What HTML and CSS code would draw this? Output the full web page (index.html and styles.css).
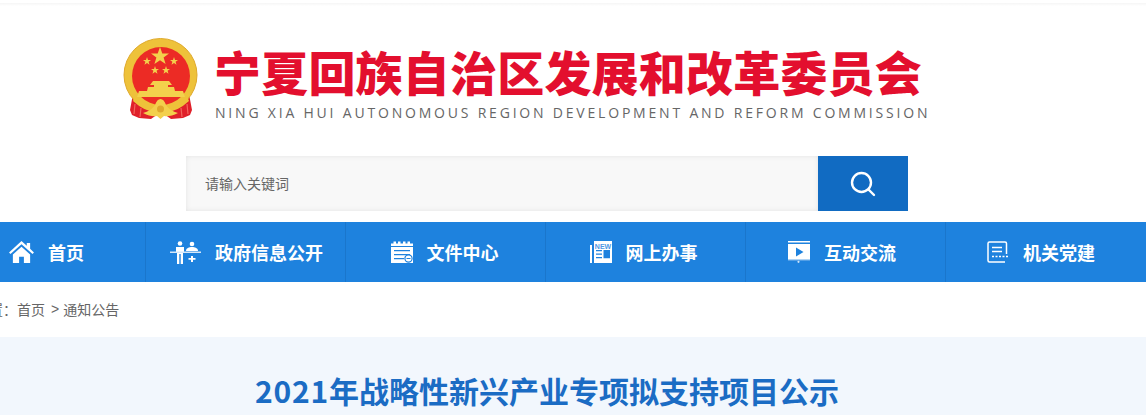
FILE: index.html
```html
<!DOCTYPE html>
<html lang="zh-CN">
<head>
  <meta charset="UTF-8" />
  <meta name="viewport" content="width=device-width, initial-scale=1" />
  <title>2021年战略性新兴产业专项拟支持项目公示</title>
  <link rel="stylesheet" href="styles.css">
</head>
<body>
  <div class="top-line"></div>

  <div class="wrap">
    <header class="logo">
      <svg class="emblem" viewBox="0 0 76 82" aria-hidden="true">
        <path d="M10 56 L7 72 L9 77 L16 80 L28 81 L35 76 L35 60 Z" fill="#e0202a"/>
        <path d="M66 56 L69 72 L67 77 L60 80 L48 81 L41 76 L41 60 Z" fill="#e0202a"/>
        <path d="M12 66 L11 76 M18 70 L17 79 M58 70 L59 79 M64 66 L65 76" stroke="#f2665c" stroke-width="1.2" fill="none"/>
        <circle cx="37.500" cy="37" r="36.500" fill="#eec23a" stroke="#dfa92c" stroke-width="1"/>
        <circle cx="38" cy="38" r="29" fill="#ec2b25"/>
        <polygon points="37,9 39.300,15.500 46,15.500 40.600,19.600 42.600,26 37,22.200 31.400,26 33.400,19.600 28,15.500 34.700,15.500" fill="#f3d04c"/>
        <polygon points="24,19 25,22 28,22 25.600,23.800 26.500,26.800 24,25 21.500,26.800 22.400,23.800 20,22 23,22" fill="#f3d04c"/>
        <polygon points="51,19 52,22 55,22 52.600,23.800 53.500,26.800 51,25 48.500,26.800 49.400,23.800 47,22 50,22" fill="#f3d04c"/>
        <polygon points="32,28 33,31 36,31 33.600,32.800 34.500,35.800 32,34 29.500,35.800 30.400,32.800 28,31 31,31" fill="#f3d04c"/>
        <polygon points="43,28 44,31 47,31 44.600,32.800 45.500,35.800 43,34 40.500,35.800 41.400,32.800 39,31 42,31" fill="#f3d04c"/>
        <path d="M30 43 H46 L49 47 H45 V49 H51 L52 53 H60 L62 59 H14 L16 53 H24 L25 49 H31 V47 H27 Z" fill="#f3d04c"/>
        <path d="M12 58 Q24 70 38 69 Q52 70 64 58 L66 63 Q52 76 38 74 Q24 76 10 63 Z" fill="#eec23a"/>
        <path d="M20 75 Q28 73 32 67 Q34 61 37.500 61 Q41 61 43 67 Q47 73 55 75 Q47 79 41 78 L37.500 81 L34 78 Q28 79 20 75 Z" fill="#f3d04c"/>
        <circle cx="37.500" cy="71" r="3.500" fill="#dfa92c"/>
      </svg>
      <div class="logo-text">
        <h1>宁夏回族自治区发展和改革委员会</h1>
        <p>NING XIA HUI AUTONOMOUS REGION DEVELOPMENT AND REFORM COMMISSION</p>
      </div>
    </header>

    <form class="search">
      <input type="text" placeholder="请输入关键词" />
      <button type="button" aria-label="搜索">
        <svg viewBox="0 0 26 26" width="26" height="26" fill="none" stroke="#fff" stroke-width="2.4" aria-hidden="true">
          <circle cx="11.500" cy="11.500" r="9.500"/>
          <path d="M18.500 18.500 L24 24" stroke-linecap="round"/>
        </svg>
      </button>
    </form>
  </div>

  <nav class="nav">
    <a href="#" class="nav-item">
      <svg class="nav-icon home" viewBox="0 0 26 24" aria-hidden="true">
        <path d="M13 0 L18.500 5 V2 H22 V8.200 L26 12 L24.500 13.500 L13 3.500 L1.500 13.500 L0 12 Z" fill="#fff"/>
        <path d="M4 14 L13 6 L22 14 V23 H15.500 V16.500 H10.500 V23 H4 Z" fill="#fff"/>
      </svg>
      <span>首页</span>
    </a>
    <a href="#" class="nav-item">
      <svg class="nav-icon wide" viewBox="0 0 31 23" aria-hidden="true">
        <circle cx="10" cy="2.500" r="2.300" fill="#fff"/>
        <path d="M6 6 H14 V11 H13 V23 H10.700 V13 H9.300 V23 H7 V11 H6 Z" fill="#fff"/>
        <circle cx="22" cy="3" r="2.300" fill="#fff"/>
        <path d="M16 10 C16 7 19 6 22 6 C25 6 28 7 28 10 Z" fill="#fff"/>
        <path d="M0 10.500 H31 V12 H0 Z" fill="#d6e8f9"/>
        <path d="M21 15 H23 V17 H25.500 V18.700 H23 V21 H21 V18.700 H18.500 V17 H21 Z" fill="#fff"/>
      </svg>
      <span>政府信息公开</span>
    </a>
    <a href="#" class="nav-item">
      <svg class="nav-icon" viewBox="0 0 22 22" aria-hidden="true">
        <path d="M0 2.500 H2.500 V0.500 H5 V2.500 H7 V0.500 H9.500 V2.500 H12 V0.500 H14.500 V2.500 H16.500 V0.500 H19 V2.500 H22 V5 H0 Z" fill="#fff"/>
        <path d="M0 6 H22 V22 H0 Z M3 9 V10.200 H19 V9 Z M3 13 V14.200 H19 V13 Z M3 17 V18.200 H13 V17 Z" fill="#fff" fill-rule="evenodd"/>
        <circle cx="17.500" cy="17.500" r="3.600" fill="#fff" stroke="#1e82de" stroke-width="1.200"/>
        <path d="M15.500 17 H19.500 V18 H15.500 Z" fill="#1e82de"/>
      </svg>
      <span>文件中心</span>
    </a>
    <a href="#" class="nav-item">
      <svg class="nav-icon" viewBox="0 0 22 22" aria-hidden="true">
        <path d="M0 4 H2 V22 H0 Z" fill="#fff"/>
        <path d="M4 0 H22 V22 H4 Z M6 9 V10.300 H12 V9 Z M6 12.500 V13.800 H12 V12.500 Z M6 16 V17.300 H12 V16 Z M13.500 9 V17.300 H20 V9 Z" fill="#fff" fill-rule="evenodd"/>
        <text class="new-tag" x="13" y="7.500" text-anchor="middle">NEW</text>
      </svg>
      <span>网上办事</span>
    </a>
    <a href="#" class="nav-item">
      <svg class="nav-icon" viewBox="0 0 22 22" aria-hidden="true">
        <path d="M0 0 H22 V1.500 H0 Z" fill="#fff"/>
        <path d="M0 3 H22 V18.500 H0 Z M8 6.500 V15.500 L15.500 11 Z" fill="#fff" fill-rule="evenodd"/>
        <path d="M0 18.500 H22 V19.300 H0 Z" fill="#cfe4f8"/>
        <circle cx="10.500" cy="20.800" r="1.100" fill="#cfe4f8"/>
      </svg>
      <span>互动交流</span>
    </a>
    <a href="#" class="nav-item">
      <svg class="nav-icon" viewBox="0 0 22 22" fill="none" stroke="#fff" stroke-width="1.500" aria-hidden="true">
        <path d="M19.500 13 V2.500 Q19.500 1 18 1 H2.500 Q1 1 1 2.500 V19.500 Q1 21 2.500 21 H18"/>
        <path d="M5 6.500 H15 M5 10.500 H15"/>
        <path d="M5 15.500 H21" stroke-dasharray="2 1.500"/>
      </svg>
      <span>机关党建</span>
    </a>
  </nav>

  <div class="crumb">
    <span>当前位置：</span><a href="#">首页</a><em>&gt;</em><a href="#">通知公告</a>
  </div>

  <main class="article">
    <h2><span class="num">2021</span>年战略性新兴产业专项拟支持项目公示</h2>
  </main>
</body>
</html>
```

FILE: styles.css
```css
html, body {
  overflow: hidden;
}
body {
  margin: 0;
  padding: 0;
  background: white;
  font-family: "Liberation Sans", "Noto Sans CJK SC", sans-serif;
  color: #555;
}
a {
  text-decoration: none;
  color: inherit;
}
.top-line {
  height: 6px;
  background: linear-gradient(#fff 50%, #f5f5f5 50%, #fff);
}
/* the page is 1200 wide and sits 54px off the left edge */
.wrap, .nav, .crumb, .article h2 {
  width: 1200px;
  margin-left: -54px;
}
.logo {
  display: flex;
  align-items: flex-start;
  gap: 15px;
  padding: 32px 0 0 177px;
  height: 118px;
}
.emblem {
  width: 76px;
  height: 82px;
  flex: none;
}
.logo-text h1 {
  margin: 3px 0 0 0;
  font-family: "Noto Sans CJK SC", sans-serif;
  font-size: 47px;
  line-height: 60px;
  font-weight: 900;
  letter-spacing: 0.2px;
  color: #e30f2e;
  white-space: nowrap;
}
.logo-text p {
  margin: 2px 0 0 1px;
  font-family: "Open Sans", sans-serif;
  font-size: 14px;
  line-height: 20px;
  letter-spacing: 2.8px;
  color: #666;
  white-space: nowrap;
}
.search {
  display: flex;
  justify-content: center;
  height: 55px;
  margin-bottom: 11px;
  padding-left: 2px;
}
.search input {
  width: 632px;
  box-sizing: border-box;
  padding: 0 19px;
  border: none;
  background: #f8f8f8;
  box-shadow: inset 0 0 5px #e2e2e2;
  font-family: "Liberation Sans", "Noto Sans CJK SC", sans-serif;
  font-size: 14px;
  outline: none;
}
.search input::placeholder {
  color: #666;
}
.search button {
  width: 90px;
  border: none;
  background: #116bc2;
  display: flex;
  align-items: center;
  justify-content: center;
  cursor: pointer;
}
.nav {
  display: flex;
  height: 60px;
  background: #1e82de;
}
.nav-item {
  width: 200px;
  box-sizing: border-box;
  display: flex;
  align-items: center;
  justify-content: center;
  gap: 14px;
  border-right: 1px solid #1a76cc;
  color: white;
  font-family: "Noto Sans CJK SC", sans-serif;
  font-size: 18px;
  font-weight: 700;
}
.nav-item:nth-child(1), .nav-item:nth-child(2) {
  padding-left: 2px;
}
.nav-item:nth-child(3) {
  padding-right: 2px;
}
.nav-item:nth-child(4) {
  padding-right: 4px;
}
.nav-item:nth-child(5) {
  padding-right: 7px;
}
.nav-item:last-child {
  padding-right: 10px;
  border-right: none;
}
.nav-icon {
  width: 22px;
  height: 22px;
  flex: none;
}
.nav-icon.home {
  width: 25px;
  height: 23px;
}
.nav-icon.wide {
  width: 31px;
  height: 23px;
}
.new-tag {
  font-family: "Liberation Sans", sans-serif;
  font-size: 7px;
  font-weight: 700;
  fill: #4f98e4;
}
.crumb {
  box-sizing: border-box;
  height: 54px;
  padding-left: 1px;
  display: flex;
  align-items: center;
  font-size: 14px;
  color: #666;
}
.crumb em {
  font-style: normal;
  margin: 0 4px 0 6px;
}
.article {
  height: 101px;
  margin-top: 1px;
  background: #f2f7fd;
  overflow: hidden;
}
.article h2 {
  margin-top: 31px;
  padding-left: 1px;
  text-align: center;
  font-family: "Noto Sans CJK SC", sans-serif;
  font-size: 30px;
  line-height: 44px;
  font-weight: 700;
  color: #1b6cc4;
}
.num {
  letter-spacing: 0.8px;
}
```
